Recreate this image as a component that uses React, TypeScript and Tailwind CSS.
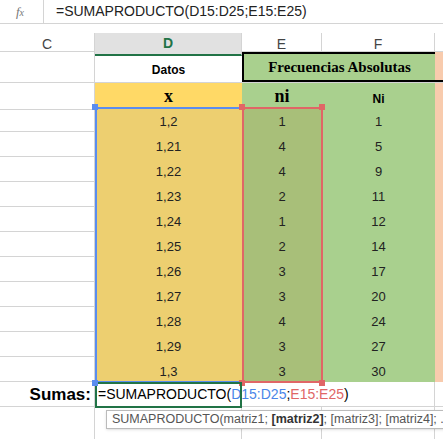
import React from "react";

const rows = [
  ["1,2", "1", "1"], ["1,21", "4", "5"], ["1,22", "4", "9"], ["1,23", "2", "11"],
  ["1,24", "1", "12"], ["1,25", "2", "14"], ["1,26", "3", "17"], ["1,27", "3", "20"],
  ["1,28", "4", "24"], ["1,29", "3", "27"], ["1,3", "3", "30"],
];
const f = { fontFamily: "'Liberation Sans', Arial, sans-serif" };
const serif = { fontFamily: "'Liberation Serif', serif" };
const cols = "grid grid-cols-[95px_147px_80px_113px_8px]";

export default function App() {
  return (
    <div className="w-[443px] h-[439px] bg-white overflow-hidden relative text-[13px] text-[#222]" style={f}>
      <div className="h-[24px] flex items-center border-b border-[#d4d4d4]">
        <div className="w-[40px] text-center text-[#777] italic" style={serif}>f<span className="text-[10px]">x</span></div>
        <div className="h-full border-l border-[#d4d4d4] ml-[3px] pl-[12px] flex items-center text-[14px]">=SUMAPRODUCTO(D15:D25;E15:E25)</div>
      </div>
      <div className="h-[9px] bg-white" />
      <div className={`${cols} h-[19px] border-b border-[#d4d4d4] text-[#444] text-[14px]`}>
        <div className="flex items-center justify-center border-r border-[#d4d4d4]">C</div>
        <div className="flex items-center justify-center bg-[#e1e1e1] border-b-2 border-[#217346] text-[#217346] font-bold border-r border-r-[#d4d4d4]">D</div>
        <div className="flex items-center justify-center border-r border-[#d4d4d4]">E</div>
        <div className="flex items-center justify-center border-r border-[#d4d4d4]">F</div>
        <div />
      </div>
      <div className={`${cols} h-[31px] border-b border-[#d4d4d4]`}>
        <div className="border-r border-[#d4d4d4]" />
        <div className="flex items-end justify-center pb-[3px] font-bold text-[12px] text-black">Datos</div>
        <div className="col-span-2 bg-[#a9d08e] border-l-2 border-t-2 border-b-2 border-black flex items-center justify-center font-bold text-[15px] text-black" style={serif}>Frecuencias Absolutas</div>
        <div className="bg-[#f8cbad] border-b-2 border-black" />
      </div>
      <div className={`${cols} h-[24px]`}>
        <div className="border-r border-b border-[#d4d4d4]" />
        <div className="bg-[#ffd966] flex items-center justify-center font-bold text-[18px] text-black" style={serif}>x</div>
        <div className="bg-[#a9d08e] flex items-center justify-center font-bold text-[18px] text-black" style={serif}>ni</div>
        <div className="bg-[#a9d08e] flex items-end pb-[2px] justify-center font-bold text-[12px] text-black">Ni</div>
        <div className="bg-[#f8cbad]" />
      </div>
      {rows.map((r, i) => (
        <div key={i} className={`${cols} h-[25px]`}>
          <div className="border-r border-b border-[#d4d4d4]" />
          <div className="bg-[#edcf70] flex items-end pb-[1px] justify-center">{r[0]}</div>
          <div className="bg-[#a8bf79] flex items-end pb-[1px] justify-center">{r[1]}</div>
          <div className="bg-[#a9d08e] flex items-end pb-[1px] justify-center">{r[2]}</div>
          <div className="bg-[#f8cbad]" />
        </div>
      ))}
      <div className={`${cols} h-[25px] border-b border-[#d4d4d4]`}>
        <div className="flex items-center justify-end pr-[3px] font-bold text-[17px] text-black border-r border-[#d4d4d4]">Sumas:</div>
        <div className="col-span-2 flex items-center pl-[3px] text-[14px] text-black whitespace-nowrap">
          =SUMAPRODUCTO(<span className="text-[#4a86e8]">D15:D25</span>;<span className="text-[#e06666]">E15:E25</span><span className="w-px h-[16px] bg-black" />)
        </div>
        <div className="border-r border-[#d4d4d4]" />
        <div />
      </div>
      <div className={`${cols} h-[40px]`}>
        <div className="border-r border-[#d4d4d4]" />
        <div className="border-r border-[#d4d4d4]" />
        <div className="border-r border-[#d4d4d4]" />
        <div className="border-r border-[#d4d4d4]" />
        <div />
      </div>
      {/* selection overlays */}
      <div className="absolute left-[95px] top-[107px] w-[147px] h-[276px] border-2 border-[#5b8def] border-r-0" />
      <div className="absolute left-[92px] top-[104px] w-[6px] h-[6px] bg-[#5b8def]" />
      <div className="absolute left-[242px] top-[107px] w-[81px] h-[276px] border-2 border-[#e06666]" />
      <div className="absolute left-[239px] top-[104px] w-[6px] h-[6px] bg-[#e06666]" />
      <div className="absolute left-[319px] top-[104px] w-[6px] h-[6px] bg-[#e06666]" />
      <div className="absolute left-[319px] top-[380px] w-[6px] h-[6px] bg-[#e06666]" />
      <div className="absolute left-[239px] top-[380px] w-[6px] h-[6px] bg-[#e06666]" />
      <div className="absolute left-[95px] top-[382px] w-[147px] h-[26px] border-2 border-[#217346]" />
      <div className="absolute left-[92px] top-[380px] w-[6px] h-[6px] bg-[#5b8def]" />
      <div className="absolute left-[106px] top-[410px] h-[19px] px-[5px] flex items-center bg-white border border-[#bbb] shadow-sm text-[12.5px] text-[#555] whitespace-nowrap">
        SUMAPRODUCTO(matriz1;&nbsp;<b className="text-[#333]">[matriz2]</b>; [matriz3]; [matriz4]; ...)
      </div>
    </div>
  );
}
